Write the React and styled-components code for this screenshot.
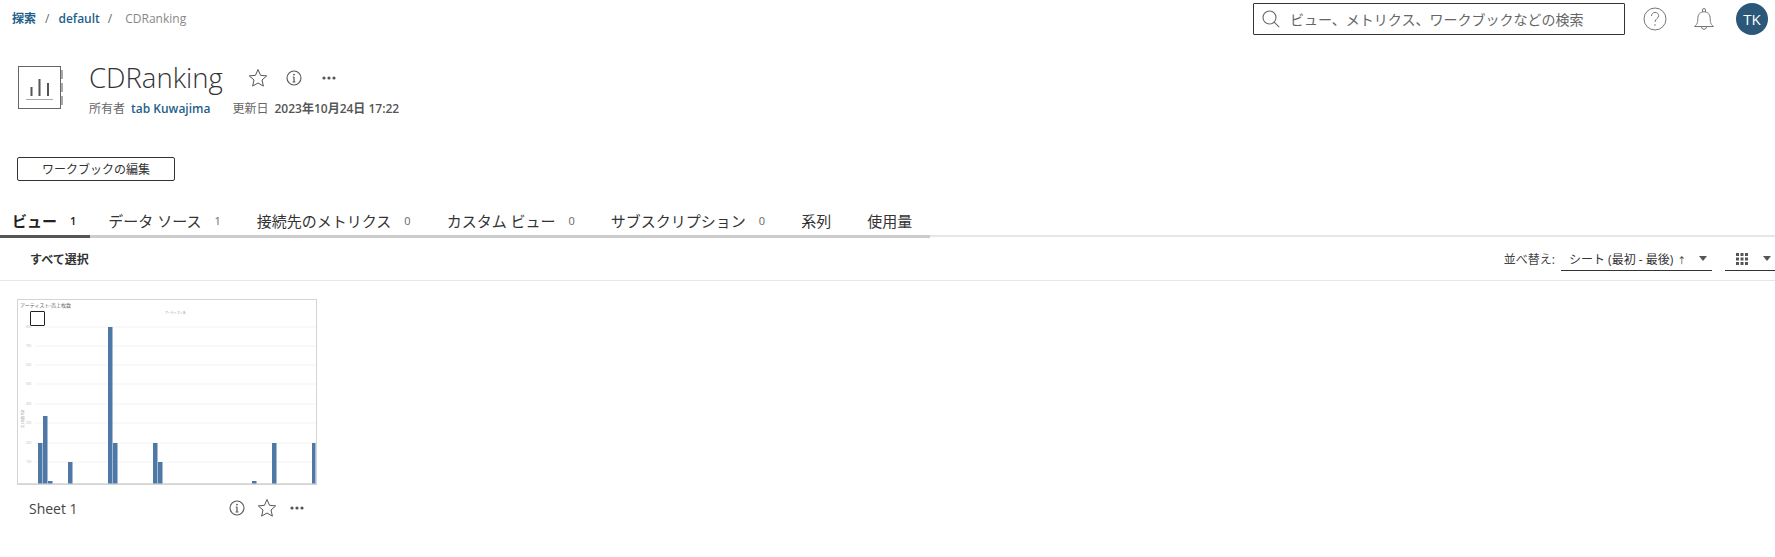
import React from 'react'
import styled, { createGlobalStyle } from 'styled-components'

const GlobalStyle = createGlobalStyle`
  html, body {
    margin: 0;
    background: #fff;
    font-family: "Open Sans", "Noto Sans CJK JP", sans-serif;
    color: #333;
  }
  * { box-sizing: border-box; }
`
const Page = styled.div`
  width: 1775px;
  height: 557px;
  overflow: hidden;
  background: #fff;
`
const TopBar = styled.div`
  display: flex;
  justify-content: space-between;
  align-items: flex-start;
  height: 66px;
  padding: 3px 7px 0 12px;
`
const Crumbs = styled.div`
  display: flex;
  align-items: center;
  height: 30px;
  font-size: 12px;
`
const CrumbLink = styled.a`
  color: #1f5f8b;
  font-weight: 600;
`
const CrumbSep = styled.span`
  color: #666;
  margin: ${props => props.last ? '0 13px 0 8px' : '0 9px 0 9px'};
`
const CrumbCurrent = styled.span`
  color: #888;
`
const TopRight = styled.div`
  display: flex;
  align-items: center;
`
const SearchBox = styled.div`
  display: flex;
  align-items: center;
  width: 372px;
  height: 32px;
  border: 1px solid #333;
  border-radius: 1px;
  padding-left: 8px;
  gap: 10px;
  font-size: 14px;
  color: #666;
  margin-right: 18px;
`
const IconSlot = styled.div`
  display: flex;
  margin-right: ${props => props.gap}px;
`
const Avatar = styled.div`
  width: 32px;
  height: 32px;
  border-radius: 50%;
  background: #2b5878;
  color: #fff;
  font-size: 15px;
  display: flex;
  align-items: center;
  justify-content: center;
`
const Header = styled.div`
  display: flex;
  padding-left: 18px;
  height: 91px;
`
const WorkbookIcon = styled.div`
  display: flex;
  width: 71px;
`
const TitleBlock = styled.div`
  display: flex;
  flex-direction: column;
`
const TitleRow = styled.div`
  display: flex;
  align-items: center;
  height: 24px;
  margin-bottom: 8px;
`
const Title = styled.h1`
  margin: 0 25px 0 0;
  font-size: 27.5px;
  font-weight: 300;
  line-height: 24px;
  color: #333;
`
const TitleIcon = styled.div`
  display: flex;
  margin-right: ${props => props.gap}px;
`
const Meta = styled.div`
  display: flex;
  align-items: center;
  font-size: 12px;
  color: #666;
  height: 20px;
`
const MetaLink = styled.a`
  color: #1f5f8b;
  font-weight: 600;
  margin: 0 22px 0 6px;
`
const MetaValue = styled.span`
  font-weight: 600;
  margin-left: 6px;
  color: #555;
`
const EditButton = styled.button`
  display: block;
  width: 158px;
  height: 24px;
  margin: 0 0 0 17px;
  padding: 0;
  background: #fff;
  border: 1px solid #333;
  border-radius: 2px;
  font: inherit;
  font-size: 12px;
  color: #333;
`
const TabBar = styled.div`
  display: flex;
  margin-top: 27px;
  height: 29px;
  border-bottom: 2px solid #e6e6e6;
`
const TabGroup = styled.div`
  display: flex;
  height: 30px;
  border-bottom: 3px solid #ccc;
`
const Tab = styled.div`
  display: flex;
  align-items: center;
  height: 30px;
  padding: 0 ${props => props.pr}px 3px ${props => props.pl}px;
  font-size: 15px;
  font-weight: ${props => props.active ? 700 : 400};
  color: ${props => props.active ? '#222' : '#333'};
  border-bottom: 3px solid ${props => props.active ? '#555' : 'transparent'};
  margin-bottom: -3px;
`
const Count = styled.span`
  font-size: 11px;
  margin-left: 13px;
  color: ${props => props.active ? '#222' : '#666'};
  font-weight: ${props => props.active ? 600 : 400};
`
const Toolbar = styled.div`
  display: flex;
  justify-content: space-between;
  align-items: center;
  height: 43px;
  margin-top: 1px;
  padding-left: 30px;
  border-bottom: 1px solid #e6e6e6;
`
const SelectAll = styled.div`
  font-size: 12px;
  font-weight: 600;
  color: #333;
`
const SortArea = styled.div`
  display: flex;
  align-items: center;
  font-size: 12px;
  color: #333;
`
const SortLabel = styled.span`
  margin-right: 6px;
  color: #444;
`
const Select = styled.div`
  display: flex;
  align-items: center;
  justify-content: space-between;
  width: ${props => props.width}px;
  height: 24px;
  margin: 0 ${props => props.mr}px 0 0;
  padding: 0 ${props => props.pr}px 0 ${props => props.pl}px;
  border-bottom: 1px solid #333;
`
const SortDirection = styled.span`
  font-size: 9px;
  margin-left: 4px;
`
const Arrow = styled.span`
  width: 0;
  height: 0;
  border-left: 4px solid transparent;
  border-right: 4px solid transparent;
  border-top: 5px solid #555;
`
const Card = styled.div`
  width: 300px;
  margin: 18px 0 0 17px;
`
const Thumb = styled.div`
  position: relative;
  height: 186px;
  border: 1px solid #d4d4d4;
  display: flex;
`
const Check = styled.div`
  position: absolute;
  left: 12px;
  top: 11px;
  width: 15px;
  height: 15px;
  background: #fff;
  border: 1px solid #222;
  border-radius: 1px;
`
const Caption = styled.div`
  display: flex;
  align-items: center;
  height: 20px;
  margin-top: 13px;
  padding-left: 12px;
`
const CardName = styled.div`
  font-size: 14px;
  color: #444;
  margin-right: auto;
`
const CaptionIcon = styled.div`
  display: flex;
  margin-right: ${props => props.gap}px;
`

const StarIcon = ({ size }) => (
  <svg width={size} height={size} viewBox="0 0 20 20" fill="none" stroke="#555" strokeWidth="1">
    <path d="M10 1.5l2.5 5.8 6.2.6-4.7 4.1 1.4 6.1L10 15l-5.4 3.1L6 12 1.3 7.9l6.2-.6z" />
  </svg>
)
const InfoIcon = ({ size }) => (
  <svg width={size} height={size} viewBox="0 0 16 16" fill="none" stroke="#555">
    <circle cx="8" cy="8" r="7" strokeWidth="1.1" />
    <path d="M8 7v5M6.6 12h2.8M6.8 7H8" strokeWidth="1.2" />
    <circle cx="8" cy="4.6" r="0.9" fill="#555" stroke="none" />
  </svg>
)
const DotsIcon = () => (
  <svg width="14" height="4" viewBox="0 0 14 4" fill="#555">
    <circle cx="2" cy="2" r="1.6" />
    <circle cx="7" cy="2" r="1.6" />
    <circle cx="12" cy="2" r="1.6" />
  </svg>
)
const SearchIcon = () => (
  <svg width="18" height="18" viewBox="0 0 18 18" fill="none" stroke="#666" strokeWidth="1.1">
    <circle cx="7.5" cy="7.5" r="6.5" />
    <path d="M12.2 12.2l5 5" />
  </svg>
)
const HelpIcon = () => (
  <svg width="24" height="24" viewBox="0 0 24 24" fill="none" stroke="#777" strokeWidth="1">
    <circle cx="12" cy="12" r="11" />
    <path d="M8.5 9c0-2.2 1.6-3.6 3.6-3.6s3.6 1.3 3.6 3.3c0 2.9-3.7 3-3.7 6.3" />
    <circle cx="12" cy="18" r="0.8" fill="#777" stroke="none" />
  </svg>
)
const BellIcon = () => (
  <svg width="22" height="24" viewBox="0 0 22 24" fill="none" stroke="#777" strokeWidth="1">
    <path d="M1.5 19.5c2-1.7 3.3-3 3.3-8 0-4 2.5-6.7 6.2-6.7s6.2 2.7 6.2 6.7c0 5 1.3 6.3 3.3 8z" />
    <path d="M9.5 4.9V3a1.5 1.5 0 0 1 3 0v1.9M8.5 19.8a2.5 2.5 0 0 0 5 0" />
  </svg>
)
const BookIcon = () => (
  <svg width="46" height="44" viewBox="0 0 46 44">
    <rect x="0.5" y="0.5" width="42" height="42" fill="#fff" stroke="#666" />
    <rect x="43" y="4" width="2" height="9" fill="#aaa" />
    <rect x="43" y="17" width="2" height="9" fill="#aaa" />
    <rect x="43" y="30" width="2" height="9" fill="#aaa" />
    <path d="M13.5 21v9M21.5 13v17M30 17v13" stroke="#555" strokeWidth="2" />
    <path d="M8 33.5h27" stroke="#aaa" />
  </svg>
)
const GridIcon = () => (
  <svg width="12" height="12" viewBox="0 0 12 12" fill="#555">
    {[0, 4.5, 9].flatMap(x => [0, 4.5, 9].map(y => (
      <rect key={`${x}-${y}`} x={x} y={y} width="3" height="3" />
    )))}
  </svg>
)

// x, width, value top measured against the thumbnail
const bars = [
  [20, 5, 143], [25, 5, 116], [30, 5, 181], [50, 5, 162], [90, 5, 27], [95, 5, 143],
  [135, 5, 143], [140, 5, 162], [234, 5, 181], [254, 5, 143], [294, 4, 143],
]
const gridLines = [27, 46, 65, 84, 104, 123, 143, 162]

const ThumbChart = () => (
  <svg width="298" height="184" viewBox="0 0 298 184">
    <text x="2" y="7" fontSize="5" fill="#666">アーティスト-売上枚数</text>
    <text x="147" y="14" fontSize="3" fill="#999">アーティスト名</text>
    {gridLines.map(y => (
      <line key={y} x1="17" x2="298" y1={y} y2={y} stroke="#f3f3f3" />
    ))}
    {gridLines.map((y, i) => (
      <text key={y} x="8" y={y + 1} fontSize="3" fill="#bbb">{(8 - i) * 100}</text>
    ))}
    <text x="6" y="128" fontSize="3" fill="#999" transform="rotate(-90 6 128)">売上枚数 合計</text>
    <line x1="0" x2="298" y1="183.5" y2="183.5" stroke="#ddd" />
    {bars.map(([x, w, top]) => (
      <rect key={x} x={x} y={top} width={w - 0.5} height={183.5 - top} fill="#4e79a7" />
    ))}
  </svg>
)

const tabs = [
  { label: 'ビュー', count: 1, active: true, pl: 12, pr: 14 },
  { label: 'データ ソース', count: 1, pl: 18, pr: 18 },
  { label: '接続先のメトリクス', count: 0, pl: 18, pr: 18 },
  { label: 'カスタム ビュー', count: 0, pl: 18, pr: 18 },
  { label: 'サブスクリプション', count: 0, pl: 18, pr: 18 },
  { label: '系列', pl: 18, pr: 18 },
  { label: '使用量', pl: 18, pr: 18 },
]

const App = () => (
  <Page>
    <GlobalStyle />
    <TopBar>
      <Crumbs>
        <CrumbLink>探索</CrumbLink>
        <CrumbSep>/</CrumbSep>
        <CrumbLink>default</CrumbLink>
        <CrumbSep last>/</CrumbSep>
        <CrumbCurrent>CDRanking</CrumbCurrent>
      </Crumbs>
      <TopRight>
        <SearchBox>
          <SearchIcon />
          ビュー、メトリクス、ワークブックなどの検索
        </SearchBox>
        <IconSlot gap={26}><HelpIcon /></IconSlot>
        <IconSlot gap={21}><BellIcon /></IconSlot>
        <Avatar>TK</Avatar>
      </TopRight>
    </TopBar>
    <Header>
      <WorkbookIcon><BookIcon /></WorkbookIcon>
      <TitleBlock>
        <TitleRow>
          <Title>CDRanking</Title>
          <TitleIcon gap={18}><StarIcon size={20} /></TitleIcon>
          <TitleIcon gap={20}><InfoIcon size={16} /></TitleIcon>
          <TitleIcon><DotsIcon /></TitleIcon>
        </TitleRow>
        <Meta>
          所有者<MetaLink>tab Kuwajima</MetaLink>
          更新日<MetaValue>2023年10月24日 17:22</MetaValue>
        </Meta>
      </TitleBlock>
    </Header>
    <EditButton>ワークブックの編集</EditButton>
    <TabBar>
      <TabGroup>
        {tabs.map(t => (
          <Tab key={t.label} active={t.active} pl={t.pl} pr={t.pr}>
            {t.label}
            {t.count !== undefined && <Count active={t.active}>{t.count}</Count>}
          </Tab>
        ))}
      </TabGroup>
    </TabBar>
    <Toolbar>
      <SelectAll>すべて選択</SelectAll>
      <SortArea>
        <SortLabel>並べ替え:</SortLabel>
        <Select width={151} mr={13} pl={8} pr={5}>
          <span>シート (最初 - 最後)<SortDirection>↑</SortDirection></span>
          <Arrow />
        </Select>
        <Select width={50} mr={0} pl={11} pr={4}>
          <GridIcon />
          <Arrow />
        </Select>
      </SortArea>
    </Toolbar>
    <Card>
      <Thumb>
        <ThumbChart />
        <Check />
      </Thumb>
      <Caption>
        <CardName>Sheet 1</CardName>
        <CaptionIcon gap={12}><InfoIcon size={16} /></CaptionIcon>
        <CaptionIcon gap={13}><StarIcon size={20} /></CaptionIcon>
        <CaptionIcon gap={13}><DotsIcon /></CaptionIcon>
      </Caption>
    </Card>
  </Page>
)

export default App
